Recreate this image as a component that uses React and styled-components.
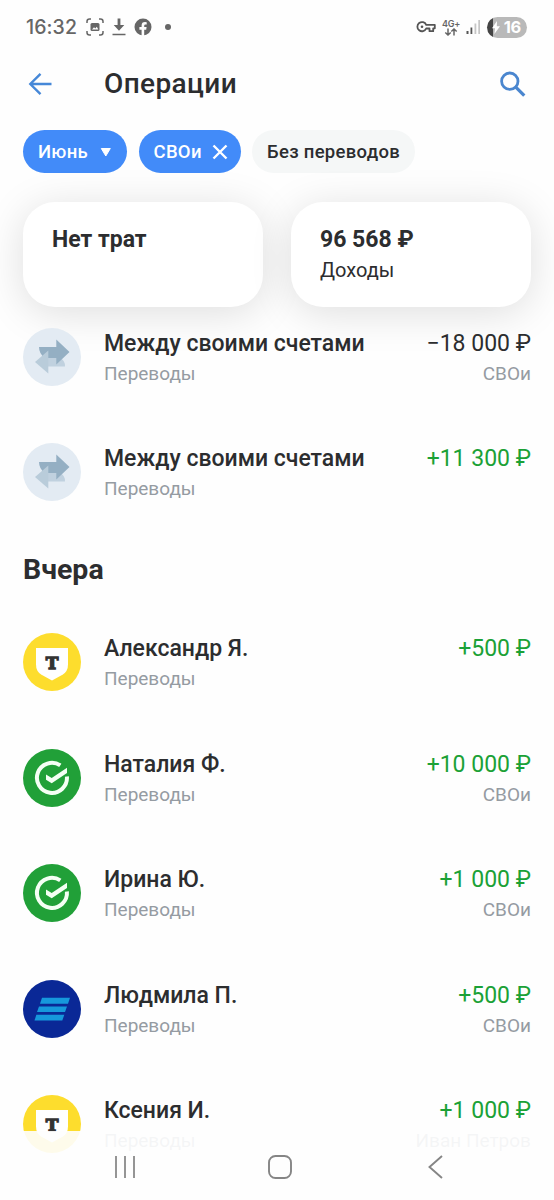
import styled, { createGlobalStyle } from "styled-components";

const GlobalStyle = createGlobalStyle`
  * {
    box-sizing: border-box;
  }

  body {
    margin: 0;
    background: #fefefe;
    font-family: Roboto, "Liberation Sans", sans-serif;
    color: #2c2d2f;
  }
`;

const Screen = styled.div`
  position: relative;
  display: flex;
  flex-direction: column;
  width: 554px;
  height: 1200px;
  overflow: hidden;
  background: #fefefe;
`;

const StatusBar = styled.div`
  display: flex;
  align-items: center;
  height: 54px;
  padding: 0 27px 0 26px;
  color: #666;

  svg {
    display: block;
    flex: none;
  }
`;

const Time = styled.div`
  width: 60px;
  font-family: Inter, sans-serif;
  font-size: 19.5px;
  font-weight: 500;
  letter-spacing: 0.1px;
`;

const StatusIcons = styled.div`
  display: flex;
  align-items: center;
  gap: ${({ gap }) => gap}px;
`;

const StatusRight = styled(StatusIcons)`
  margin-left: auto;
`;

const Network = styled.div`
  display: flex;
  flex-direction: column;
  align-items: center;
  width: 18px;
  font-family: Inter, sans-serif;
  font-size: 9px;
  font-weight: 600;
  line-height: 9px;
  letter-spacing: -0.2px;
  white-space: nowrap;
`;

const Battery = styled.div`
  display: flex;
  align-items: center;
  justify-content: flex-end;
  gap: 4px;
  width: 40px;
  height: 21px;
  padding-right: 6px;
  border-radius: 11px;
  background: linear-gradient(to right, #444 6px, #b9b9b9 6px);
  color: #fff;
  font-family: Inter, sans-serif;
  font-size: 16.5px;
  font-weight: 700;
  letter-spacing: -0.3px;
`;

const Header = styled.header`
  display: flex;
  align-items: center;
  height: 60px;
  padding: 0 28px;

  svg {
    display: block;
    flex: none;
  }
`;

const Title = styled.h1`
  flex-grow: 1;
  margin: 0 0 0 51px;
  font-size: 28px;
  line-height: 34px;
  font-weight: 500;
  letter-spacing: 0.4px;
`;

const Chips = styled.div`
  display: flex;
  gap: 11.5px;
  padding: 16px 23px 0;
`;

const Chip = styled.button`
  display: flex;
  align-items: center;
  justify-content: space-between;
  width: ${({ width }) => width}px;
  height: 43px;
  padding: 0 ${({ active }) => (active ? 13 : 14)}px 0 15px;
  border: 0;
  border-radius: 22px;
  background: ${({ active }) => (active ? "#428bf9" : "#f5f7f7")};
  color: ${({ active }) => (active ? "#fff" : "#2c2d2f")};
  font-family: inherit;
  font-size: 18.5px;
  font-weight: 500;
  letter-spacing: 0.3px;
  white-space: nowrap;
`;

const Cards = styled.div`
  display: flex;
  gap: 28px;
  padding: 29px 23px 0;
`;

const Card = styled.div`
  flex: 1;
  height: 105px;
  padding: 23px 29px;
  border-radius: 32px;
  background: #fff;
  box-shadow: 0 6px 42px rgba(0, 0, 0, 0.13);
`;

const CardTitle = styled.div`
  font-size: 23px;
  line-height: 30px;
  font-weight: 700;
`;

const CardText = styled.div`
  font-size: 20px;
  line-height: 31px;
`;

const List = styled.div`
  position: relative;
  display: flex;
  flex-direction: column;
  gap: 57.4px;
  padding: 0 23px;
  margin-top: ${({ top }) => top || 0}px;
`;

const SectionTitle = styled.h2`
  margin: 52.6px 23px 47.4px;
  font-size: 28.5px;
  line-height: 32px;
  font-weight: 700;
`;

const Row = styled.div`
  display: flex;
  height: 58px;
`;

const Avatar = styled.svg`
  display: block;
  flex: none;
  width: 58px;
  height: 58px;
`;

const AvatarLetter = styled.text`
  font-family: "DejaVu Serif", serif;
  font-size: 17px;
  font-weight: 700;
  text-anchor: middle;
  fill: #333;
  stroke: #333;
  stroke-width: 1.3px;
`;

const Info = styled.div`
  flex-grow: 1;
  margin-left: 23px;
  white-space: nowrap;
`;

const Name = styled.div`
  font-size: 23px;
  line-height: 31px;
  font-weight: 500;
`;

const Side = styled.div`
  text-align: right;
  white-space: nowrap;
`;

const Amount = styled.div`
  font-size: 23px;
  line-height: 31px;
  color: ${({ income }) => (income ? "#1ba136" : "#2c2d2f")};
`;

const Caption = styled.div`
  font-size: 19px;
  line-height: 30px;
  color: #959ba2;
`;

const NavBar = styled.nav`
  position: absolute;
  left: 0;
  right: 0;
  bottom: 0;
  display: flex;
  align-items: center;
  height: 69px;
  padding: 3px 111px 0 114px;
  background: rgba(254, 254, 254, 0.91);
`;

const HomeIcon = styled.svg`
  margin: 0 136px 0 132px;
`;

function TransferLogo() {
  return (
    <Avatar viewBox="0 0 58 58">
      <circle cx="29" cy="29" r="29" fill="#e3ebf3" />
      <path d="M25 30H37Q42 32 42 38.500H25Z" fill="#c0d1df" />
      <path d="M16 19H33.300V11.500L46.500 24L33.300 36.500V30H22Q16 26 16 19Z" fill="#94afc3" />
      <path d="M25.300 22.500V45.500L12 34Z" fill="#b9ccda" />
    </Avatar>
  );
}

function TLogo() {
  return (
    <Avatar viewBox="0 0 58 58">
      <circle cx="29" cy="29" r="29" fill="#fddd2d" />
      <path d="M13 15H45V31.500Q45 38.500 39.500 41.800L29 47.500L18.500 41.800Q13 38.500 13 31.500Z" fill="#fff" />
      <AvatarLetter x="29" y="36.300">
        T
      </AvatarLetter>
    </Avatar>
  );
}

function CheckLogo() {
  return (
    <Avatar viewBox="0 0 58 58">
      <circle cx="29" cy="29" r="29" fill="#21a038" />
      <path d="M37.300 16.400A15 15 0 1 0 43.900 27.500" fill="none" stroke="#f4fff4" strokeWidth="4" />
      <path d="M23 25.500V30.700L28.700 34.200L44 24V18.800L28.700 29Z" fill="#f4fff4" />
    </Avatar>
  );
}

function StripesLogo() {
  return (
    <Avatar viewBox="0 0 58 58">
      <circle cx="29" cy="29" r="29" fill="#0a2896" />
      <path d="M19 17.800H47L45 23.700H17Z" fill="#1698dc" />
      <path d="M16 26.400H44L42 32H14Z" fill="#1698dc" />
      <path d="M13.300 34.800H41.300L39.300 40.600H11.500Z" fill="#1698dc" />
    </Avatar>
  );
}

const logos = {
  transfer: TransferLogo,
  tbank: TLogo,
  check: CheckLogo,
  stripes: StripesLogo,
};

const today = [
  { id: 1, logo: "transfer", name: "Между своими счетами", amount: "−18 000 ₽", label: "СВОи" },
  { id: 2, logo: "transfer", name: "Между своими счетами", amount: "+11 300 ₽" },
];

const yesterday = [
  { id: 3, logo: "tbank", name: "Александр Я.", amount: "+500 ₽" },
  { id: 4, logo: "check", name: "Наталия Ф.", amount: "+10 000 ₽", label: "СВОи" },
  { id: 5, logo: "check", name: "Ирина Ю.", amount: "+1 000 ₽", label: "СВОи" },
  { id: 6, logo: "stripes", name: "Людмила П.", amount: "+500 ₽", label: "СВОи" },
  { id: 7, logo: "tbank", name: "Ксения И.", amount: "+1 000 ₽", label: "Иван Петров" },
];

function Operation({ operation }) {
  const Logo = logos[operation.logo];

  return (
    <Row>
      <Logo />
      <Info>
        <Name>{operation.name}</Name>
        <Caption>Переводы</Caption>
      </Info>
      <Side>
        <Amount income={operation.amount.startsWith("+") ? 1 : 0}>
          {operation.amount}
        </Amount>
        {operation.label && <Caption>{operation.label}</Caption>}
      </Side>
    </Row>
  );
}

function Status() {
  return (
    <StatusBar>
      <Time>16:32</Time>
      <StatusIcons gap={8}>
        <svg width="18" height="18" viewBox="0 0 18 18" fill="none" stroke="#666" strokeWidth="1.500">
          <path d="M1 5V3.500Q1 1 3.500 1H5M13 1H14.500Q17 1 17 3.500V5M17 13V14.500Q17 17 14.500 17H13M5 17H3.500Q1 17 1 14.500V13" />
          <rect x="4.500" y="5" width="9" height="8" rx="1.500" fill="#666" stroke="none" />
          <path d="M6 11.500L8 9.300L9.300 10.500L10.800 8.700L12.300 11.500Z" fill="#fff" stroke="none" />
        </svg>
        <svg width="14" height="18" viewBox="0 0 14 18">
          <path d="M5.600 0.500H8.400V7H12.300L7 12.700L1.700 7H5.600ZM0.500 15.800H13.500V17.300H0.500Z" fill="#666" />
        </svg>
        <svg width="18" height="18" viewBox="0 0 18 18">
          <circle cx="9" cy="9" r="8.500" fill="#666" />
          <path d="M7.600 18V11.700H5.400V9.100H7.600V7.400Q7.600 4 11 4Q12 4 12.700 4.200V6.400H11.500Q10.200 6.400 10.200 7.700V9.100H12.600L12.200 11.700H10.200V18Z" fill="#fefefe" />
        </svg>
        <svg width="22" height="18" viewBox="0 0 22 18">
          <circle cx="8" cy="9" r="3" fill="#666" />
        </svg>
      </StatusIcons>
      <StatusRight gap={6}>
        <svg width="20" height="12" viewBox="0 0 20 12" fill="none" stroke="#555" strokeWidth="1.800">
          <path d="M10.200 3.800H18.800V7.300H17.200V10.200H13.500V7.500H10.200A4.600 4.600 0 1 1 10.200 3.800Z" strokeLinejoin="round" />
          <circle cx="6" cy="5.700" r="1.300" fill="#555" stroke="none" />
        </svg>
        <Network>
          4G+
          <svg width="14" height="8" viewBox="0 0 14 8" fill="none" stroke="#666" strokeWidth="1.500">
            <path d="M4 0.500V7M1.300 4.500L4 7L6.700 4.500M10 7.500V1M7.300 3.500L10 1L12.700 3.500" />
          </svg>
        </Network>
        <svg width="15" height="16" viewBox="0 0 15 16">
          <path d="M0.500 12H2.500V15H0.500ZM4.500 8.500H6.300V15H4.500Z" fill="#555" />
          <path d="M8.500 4.500H10.300V15H8.500ZM12.300 1H14V15H12.300Z" fill="#c6c6c6" />
        </svg>
        <Battery>
          <svg width="8" height="13" viewBox="0 0 8 13">
            <path d="M5 0L0 7.300H3L2.400 13L8 5.300H4.800Z" fill="#fff" />
          </svg>
          16
        </Battery>
      </StatusRight>
    </StatusBar>
  );
}

export default function App() {
  return (
    <>
      <GlobalStyle />
      <Screen>
        <Status />
        <Header>
          <svg width="25" height="24" viewBox="0 0 25 24" fill="none" stroke="#4688d8" strokeWidth="2.400">
            <path d="M23.500 12H2.500M12.500 1.800L2.300 12L12.500 22.200" />
          </svg>
          <Title>Операции</Title>
          <svg width="26" height="26" viewBox="0 0 26 26" fill="none" stroke="#4a86cf">
            <circle cx="9.800" cy="10.200" r="8.200" strokeWidth="2.800" />
            <path d="M15.800 16.200L24.300 24.700" strokeWidth="3.300" />
          </svg>
        </Header>
        <Chips>
          <Chip active={1} width={104}>
            Июнь
            <svg width="16" height="10" viewBox="0 0 16 10">
              <path d="M3.300 1.500H12.300L7.800 9Z" fill="#fff" stroke="#fff" strokeLinejoin="round" />
            </svg>
          </Chip>
          <Chip active={1} width={102}>
            СВОи
            <svg width="16" height="16" viewBox="0 0 16 16" stroke="#fff" strokeWidth="2.400">
              <path d="M1.500 1.500L14.500 14.500M14.500 1.500L1.500 14.500" />
            </svg>
          </Chip>
          <Chip width={163}>Без переводов</Chip>
        </Chips>
        <Cards>
          <Card>
            <CardTitle>Нет трат</CardTitle>
          </Card>
          <Card>
            <CardTitle>96 568 ₽</CardTitle>
            <CardText>Доходы</CardText>
          </Card>
        </Cards>
        <List top={21}>
          {today.map((operation) => (
            <Operation key={operation.id} operation={operation} />
          ))}
        </List>
        <SectionTitle>Вчера</SectionTitle>
        <List>
          {yesterday.map((operation) => (
            <Operation key={operation.id} operation={operation} />
          ))}
        </List>
        <NavBar>
          <svg width="22" height="22" viewBox="0 0 22 22" stroke="#8a8a8a" strokeWidth="1.800">
            <path d="M2 0V22M11 0V22M20 0V22" />
          </svg>
          <HomeIcon width="24" height="24" viewBox="0 0 24 24" fill="none" stroke="#858585" strokeWidth="1.900">
            <rect x="1" y="1" width="22" height="22" rx="6.500" />
          </HomeIcon>
          <svg width="15" height="24" viewBox="0 0 15 24" fill="none" stroke="#858585" strokeWidth="1.900">
            <path d="M14 1L1.500 12L14 23" />
          </svg>
        </NavBar>
      </Screen>
    </>
  );
}
